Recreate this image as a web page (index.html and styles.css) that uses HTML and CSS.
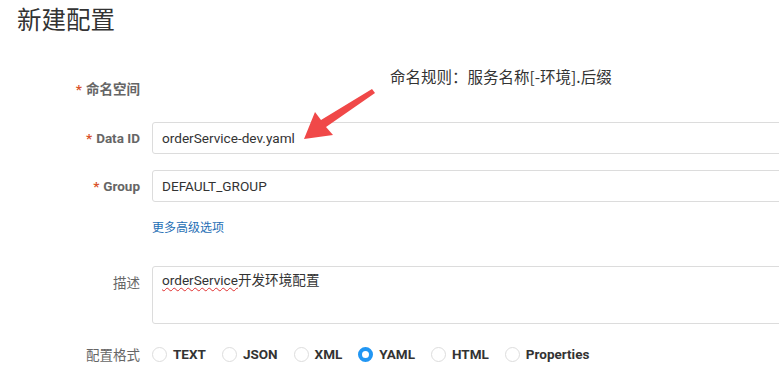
FILE: index.html
```html
<!DOCTYPE html>
<html lang="zh-CN">
<head>
  <meta charset="UTF-8">
  <title>新建配置</title>
  <link rel="stylesheet" href="styles.css">
</head>
<body>
  <h1 class="page-title">新建配置</h1>

  <div class="form">
    <div class="row row-ns">
      <label class="label required">命名空间</label>
      <div class="field"></div>
    </div>

    <div class="row row-id">
      <label class="label required">Data ID</label>
      <div class="field"><div class="input">orderService-dev.yaml</div></div>
    </div>

    <div class="row row-group">
      <label class="label required">Group</label>
      <div class="field"><div class="input">DEFAULT_GROUP</div></div>
    </div>

    <div class="row row-more">
      <div class="label"></div>
      <div class="field"><a class="more-link" href="#">更多高级选项</a></div>
    </div>

    <div class="row row-desc">
      <label class="label plain">描述</label>
      <div class="field"><div class="input textarea"><span class="typo">orderService</span>开发环境配置</div></div>
    </div>

    <div class="row row-format">
      <label class="label plain">配置格式</label>
      <div class="field radios">
        <span class="radio"><i class="dot"></i>TEXT</span>
        <span class="radio"><i class="dot"></i>JSON</span>
        <span class="radio"><i class="dot"></i>XML</span>
        <span class="radio checked"><i class="dot"></i>YAML</span>
        <span class="radio"><i class="dot"></i>HTML</span>
        <span class="radio"><i class="dot"></i>Properties</span>
      </div>
    </div>
  </div>

  <!-- annotation drawn over the form -->
  <div class="note">命名规则：服务名称[-环境].后缀</div>
  <svg class="arrow" width="100" height="60" viewBox="0 0 100 60">
    <path d="M84 6 L 81 2 L 30 33 L 24 25 L 13 52 L 42 48 L 35 40 Z" fill="#f04848"/>
  </svg>
</body>
</html>
```

FILE: styles.css
```css
body {
  margin: 0;
  width: 779px;
  height: 383px;
  overflow: hidden;
  background: #fff;
  font-family: Roboto, "Noto Sans CJK SC", sans-serif;
  color: #333;
  position: relative;
}
.page-title {
  margin: 0;
  padding: 6px 0 0 17px;
  font-size: 24.5px;
  line-height: 30px;
  font-weight: normal;
  color: #333;
}
.form {
  margin-top: 36px;
}
.row {
  display: flex;
  align-items: center;
}
.label {
  width: 140px;
  padding-right: 12px;
  text-align: right;
  font-size: 13.5px;
  color: #666;
  font-weight: bold;
  flex-shrink: 0;
}
.label.required::before {
  content: "*";
  color: #d9532c;
  margin-right: 4px;
}
.label.plain {
  font-weight: normal;
}
.field {
  width: 700px;
  flex-shrink: 0;
}
.row-ns { height: 32px; }
.row-id { margin-top: 18px; }
.row-group { margin-top: 16px; }
.row-more { margin-top: 14px; height: 20px; }
.row-desc { margin-top: 30px; align-items: flex-start; }
.row-desc .label { padding-top: 6px; }
.row-format { margin-top: 20px; height: 20px; }
.input {
  height: 32px;
  box-sizing: border-box;
  border: 1px solid #dcdcdc;
  border-radius: 3px;
  padding: 0 9px;
  line-height: 30px;
  font-size: 13.6px;
  color: #333;
}
.textarea {
  height: 58px;
  line-height: 20px;
  padding-top: 3px;
}
.typo {
  text-decoration: underline wavy #e03030;
  text-decoration-thickness: 1px;
  text-underline-offset: 2px;
}
.more-link {
  font-size: 12px;
  color: #1f6fb5;
  text-decoration: none;
}
.radios {
  display: flex;
  align-items: center;
}
.radio {
  display: inline-flex;
  align-items: center;
  font-size: 13.5px;
  font-weight: bold;
  color: #333;
  margin-right: 16px;
}
.dot {
  width: 15px;
  height: 15px;
  box-sizing: border-box;
  border: 1px solid #ddd;
  border-radius: 50%;
  margin-right: 6px;
  background: #fff;
}
.radio.checked .dot {
  border: 4.5px solid #2196f3;
  background: #fff;
}
.note {
  position: absolute;
  left: 390px;
  top: 65px;
  font-size: 15.5px;
  color: #333;
  font-family: "Noto Sans CJK SC", sans-serif;
}
.arrow {
  position: absolute;
  left: 291px;
  top: 87px;
}
```
